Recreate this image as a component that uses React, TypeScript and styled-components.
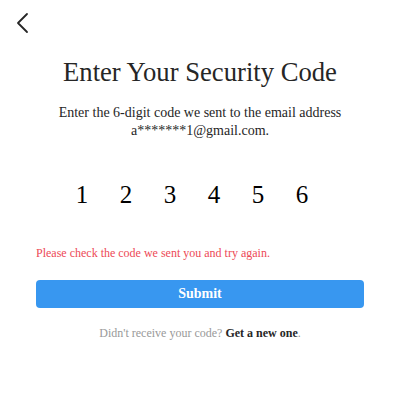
import React from "react";
import styled, { createGlobalStyle } from "styled-components";

const Global = createGlobalStyle`
  html, body { margin: 0; padding: 0; background: #fff; }
  body { font-family: "Liberation Serif", "Times New Roman", serif; color: #262626; }
`;

const Page = styled.div`
  width: 400px;
  height: 410px;
  display: flex;
  flex-direction: column;
  box-sizing: border-box;
`;

const TopBar = styled.div`
  height: 44px;
  display: flex;
  align-items: flex-start;
  padding: 12px 0 0 14px;
  box-sizing: border-box;
`;

const BackButton = styled.button`
  border: 0;
  background: none;
  padding: 0;
  width: 16px;
  height: 22px;
  display: flex;
  align-items: center;
  justify-content: center;
  cursor: pointer;
`;

const Title = styled.h1`
  margin: 12px 0 0;
  font-size: 26.67px;
  font-weight: 400;
  text-align: center;
  line-height: 32px;
  color: #262626;
`;

const Subtitle = styled.p`
  margin: 16px 0 0;
  font-size: 14px;
  line-height: 18px;
  text-align: center;
  color: #262626;
`;

const CodeRow = styled.div`
  margin-top: 40px;
  display: flex;
  justify-content: center;
  padding-right: 16px;
`;

const Digit = styled.div`
  width: 44px;
  text-align: center;
  font-size: 25px;
  line-height: 30px;
  color: #000;
`;

const Body = styled.div`
  padding: 0 36px;
  display: flex;
  flex-direction: column;
`;

const Error = styled.div`
  margin-top: 35px;
  font-size: 12px;
  line-height: 16px;
  color: #ed4956;
`;

const Submit = styled.button`
  margin-top: 19px;
  height: 28px;
  border: 0;
  border-radius: 4px;
  background: #3897f0;
  color: #fff;
  font-family: "Liberation Serif", "Times New Roman", serif;
  font-weight: 700;
  font-size: 14px;
  padding: 0 0 1px;
`;

const Footer = styled.div`
  margin-top: 17px;
  font-size: 12px;
  line-height: 16px;
  text-align: center;
  color: #999;
`;

const Link = styled.span`
  font-weight: 700;
  color: #262626;
`;

export default function App() {
  const digits = ["1", "2", "3", "4", "5", "6"];
  return (
    <>
      <Global />
      <Page>
        <TopBar>
          <BackButton aria-label="Back">
            <svg width="14" height="22" viewBox="0 0 14 22" fill="none">
              <path d="M12 2 L3 11 L12 20" stroke="#262626" strokeWidth="1.8" strokeLinecap="round" strokeLinejoin="round" />
            </svg>
          </BackButton>
        </TopBar>
        <Title>Enter Your Security Code</Title>
        <Subtitle>
          Enter the 6-digit code we sent to the email address
          <br />
          a*******1@gmail.com.
        </Subtitle>
        <CodeRow>
          {digits.map((d) => (
            <Digit key={d}>{d}</Digit>
          ))}
        </CodeRow>
        <Body>
          <Error>Please check the code we sent you and try again.</Error>
          <Submit>Submit</Submit>
          <Footer>
            Didn't receive your code? <Link>Get a new one</Link>.
          </Footer>
        </Body>
      </Page>
    </>
  );
}
